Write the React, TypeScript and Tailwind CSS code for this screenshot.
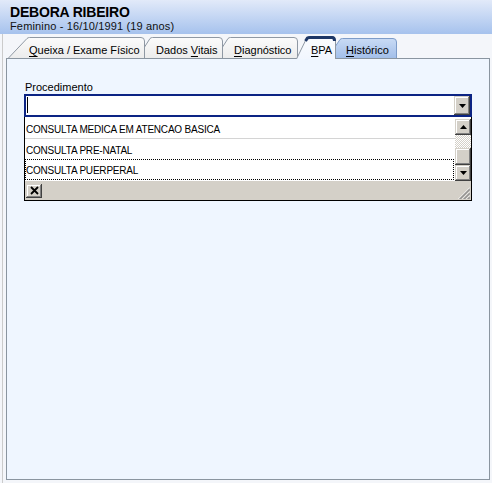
// Prontuário — aba BPA com lookup de procedimento aberto.

const btn3d =
  "bg-[#d4d0c8] shadow-[inset_-1px_-1px_#404040,inset_1px_1px_#d4d0c8,inset_-2px_-2px_#808080,inset_2px_2px_#ffffff]";

type TabKind = "normal" | "active" | "blue";

interface TabProps {
  id: string;
  label: string;
  hot: number;
  w: number;
  h: number;
  slant: number;
  kind: TabKind;
  className: string;
}

function tabPath(w: number, h: number, s: number) {
  return `M0.5 ${h} L${s - 1} 1.5 Q${s} 0.5 ${s + 1.5} 0.5 H${w - 4} Q${w - 0.5} 0.5 ${w - 0.5} 4 V${h}`;
}

function Tab({ id, label, hot, w, h, slant, kind, className }: TabProps) {
  const d = tabPath(w, h, slant);
  const stroke = kind === "blue" ? "#7d9cc9" : "#8f98a3";
  return (
    <div className={`relative shrink-0 ${className}`}>
      <svg className="absolute inset-0" width={w} height={h} viewBox={`0 0 ${w} ${h}`}>
        <defs>
          <linearGradient id={id} x1="0" y1="0" x2="0" y2="1">
            {kind === "blue" ? (
              <>
                <stop offset="0" stopColor="#c9dbf5" />
                <stop offset="1" stopColor="#a3bfe9" />
              </>
            ) : kind === "active" ? (
              <>
                <stop offset="0" stopColor="#fbfcfe" />
                <stop offset="1" stopColor="#f1f6fe" />
              </>
            ) : (
              <>
                <stop offset="0" stopColor="#fbfbfb" />
                <stop offset="1" stopColor="#ececec" />
              </>
            )}
          </linearGradient>
        </defs>
        <path d={`${d} Z`} fill={`url(#${id})`} />
        <path d={d} fill="none" stroke={stroke} />
        {kind === "active" && (
          <path
            d={`M${slant - 2.5} 5 L${slant - 0.5} 2 Q${slant + 0.5} 1.5 ${slant + 2} 1.5 H${w - 4} Q${w - 1.5} 1.5 ${w - 1.5} 5`}
            fill="none"
            stroke="#1d3767"
            strokeWidth="3"
          />
        )}
      </svg>
      <div className="relative flex h-full items-end text-[11px] leading-[13px] text-black">
        <span>
          {label.slice(0, hot)}
          <span className="underline underline-offset-[2px]">{label[hot]}</span>
          {label.slice(hot + 1)}
        </span>
      </div>
    </div>
  );
}

function Arrow({ up }: { up?: boolean }) {
  return (
    <svg width="7" height="4" viewBox="0 0 7 4">
      <path d={up ? "M3.5 0 L7 4 L0 4 Z" : "M0 0 L7 0 L3.5 4 Z"} fill="#000" />
    </svg>
  );
}

function Grip() {
  return (
    <svg width="12" height="12" viewBox="0 0 12 12">
      {[0, 4, 8].map((o) => (
        <g key={o}>
          <line x1={12} y1={o + 0.5} x2={o + 0.5} y2={12} stroke="#ffffff" />
          <line x1={12} y1={o + 1.5} x2={o + 1.5} y2={12} stroke="#808080" />
          <line x1={12} y1={o + 2.5} x2={o + 2.5} y2={12} stroke="#808080" />
        </g>
      ))}
    </svg>
  );
}

const rows = ["CONSULTA MEDICA EM ATENCAO BASICA", "CONSULTA PRE-NATAL", "CONSULTA PUERPERAL"];

export default function App() {
  return (
    <div className="flex h-[483px] w-[492px] flex-col bg-[#f4f6fa] font-['Liberation_Sans',Arial,sans-serif] text-black">
      {/* cabeçalho do paciente */}
      <div className="h-[34px] shrink-0 bg-gradient-to-b from-[#e2eaf9] to-[#a6c2ed] pl-[10px] pt-[5px]">
        <div className="text-[14px] font-bold leading-[15px] tracking-[-0.2px]">DEBORA RIBEIRO</div>
        <div className="text-[11px] leading-[12px] tracking-[0.15px] text-[#111]">
          Feminino - 16/10/1991 (19 anos)
        </div>
      </div>

      <div className="ml-[2px] flex flex-1 flex-col border-l border-[#cbcbcb] pb-[3px] pl-[3px]">
        {/* abas */}
        <div className="relative z-10 flex h-[24px] shrink-0 items-end pl-[2px]">
          <Tab id="t1" label="Queixa / Exame Físico" hot={0} w={137} h={21} slant={20} kind="normal" className="z-40 h-[21px] w-[137px] pb-px pl-[21px]" />
          <Tab id="t2" label="Dados Vitais" hot={6} w={86} h={21} slant={14} kind="normal" className="z-30 -ml-[8px] h-[21px] w-[86px] pb-px pl-[19px]" />
          <Tab id="t3" label="Diagnóstico" hot={0} w={83} h={21} slant={14} kind="normal" className="z-20 -ml-[8px] h-[21px] w-[83px] pb-px pl-[19px]" />
          <Tab id="t4" label="BPA" hot={0} w={40} h={23} slant={12} kind="active" className="z-50 -mb-px -ml-[2px] h-[23px] w-[40px] pb-[2px] pl-[15px]" />
          <Tab id="t5" label="Histórico" hot={0} w={70} h={20} slant={14} kind="blue" className="z-10 -ml-[9px] h-[20px] w-[70px] pb-px pl-[19px]" />
        </div>

        {/* painel */}
        <div className="mr-[2px] flex-1 border border-[#8a95a0] bg-[#eff6ff] pl-[17px] pt-[22px]">
          <div className="pl-px text-[11px] leading-[13px]">Procedimento</div>
          <div className="w-[448px]">
            <div className="flex h-[23px] border-2 border-[#0c2484] bg-white">
              <div className="flex-1">
                <div className="ml-px mt-px h-[16px] w-px bg-black" />
              </div>
              <div className={`flex w-[16px] items-center justify-center ${btn3d}`}>
                <Arrow />
              </div>
            </div>

            <div className="border-x border-b border-black">
              <div className="flex h-[64px] bg-white pt-px">
                <div className="flex flex-1 flex-col text-[10px] tracking-[-0.2px]">
                  <div className="flex h-[21px] items-center border-b border-[#d4d4d4] pl-px pt-[2px]">{rows[0]}</div>
                  <div className="flex h-[20px] items-center pl-px pt-[2px]">{rows[1]}</div>
                  <div className="mr-px flex h-[21px] items-center border border-dotted border-black pt-[2px]">{rows[2]}</div>
                </div>
                <div className="flex w-[16px] flex-col pt-px">
                  <div className={`flex h-[16px] items-center justify-center ${btn3d}`}>
                    <Arrow up />
                  </div>
                  <div className="h-[13px] bg-[repeating-conic-gradient(#d4d0c8_0_25%,#ffffff_0_50%)] bg-size-[2px_2px]" />
                  <div className={`h-[17px] ${btn3d}`} />
                  <div className={`flex h-[16px] items-center justify-center ${btn3d}`}>
                    <Arrow />
                  </div>
                </div>
              </div>
              <div className="flex h-[19px] items-center justify-between bg-[#d4d0c8] pl-px">
                <div className={`flex h-[14px] w-[16px] items-center justify-center ${btn3d}`}>
                  <svg width="9" height="9" viewBox="0 0 9 9">
                    <path d="M1 1 L8 8 M8 1 L1 8" stroke="#000" strokeWidth="1.8" />
                  </svg>
                </div>
                <div className="self-end pr-px pb-px">
                  <Grip />
                </div>
              </div>
            </div>
          </div>
        </div>
      </div>
    </div>
  );
}
